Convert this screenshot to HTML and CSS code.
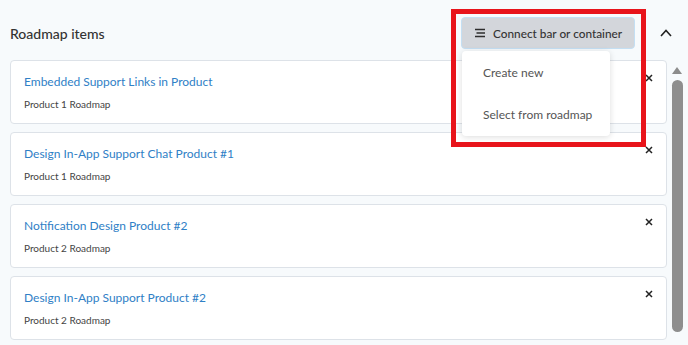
FILE: index.html
```html
<!DOCTYPE html>
<html lang="en">
<head>
    <meta charset="UTF-8">
    <meta name="viewport" content="width=device-width, initial-scale=1.0">
    <link rel="stylesheet" href="styles.css">
    <title>Roadmap items</title>
</head>
<body>
    <div class="panel">
        <div class="panel-head">
            <h2 class="panel-title">Roadmap items</h2>
            <div class="connect">
                <button class="connect-btn" type="button">
                    <svg width="12" height="10" viewBox="0 0 12 10">
                        <path d="M1 1.5h10M2.5 5h8.5M1 8.5h10" stroke="#2e2e2e" stroke-width="1.5" fill="none"/>
                    </svg>
                    Connect bar or container
                </button>
                <div class="menu">
                    <div class="menu-item">Create new</div>
                    <div class="menu-item">Select from roadmap</div>
                </div>
                <div class="highlight"></div>
            </div>
            <button class="collapse" type="button">
                <svg width="12" height="8" viewBox="0 0 12 8">
                    <path d="M1 7l5-5.5 5 5.5" stroke="#222" stroke-width="1.6" fill="none"/>
                </svg>
            </button>
        </div>

        <div class="panel-body">
            <ul class="items">
                <li class="item">
                    <a class="item-title" href="#">Embedded Support Links in Product</a>
                    <div class="item-sub">Product 1 Roadmap</div>
                    <button class="remove" type="button">
                        <svg width="8" height="8" viewBox="0 0 8 8"><path d="M1 1l6 6M7 1l-6 6" stroke="#222" stroke-width="1.5"/></svg>
                    </button>
                </li>
                <li class="item">
                    <a class="item-title" href="#">Design In-App Support Chat Product #1</a>
                    <div class="item-sub">Product 1 Roadmap</div>
                    <button class="remove" type="button">
                        <svg width="8" height="8" viewBox="0 0 8 8"><path d="M1 1l6 6M7 1l-6 6" stroke="#222" stroke-width="1.5"/></svg>
                    </button>
                </li>
                <li class="item">
                    <a class="item-title" href="#">Notification Design Product #2</a>
                    <div class="item-sub">Product 2 Roadmap</div>
                    <button class="remove" type="button">
                        <svg width="8" height="8" viewBox="0 0 8 8"><path d="M1 1l6 6M7 1l-6 6" stroke="#222" stroke-width="1.5"/></svg>
                    </button>
                </li>
                <li class="item">
                    <a class="item-title" href="#">Design In-App Support Product #2</a>
                    <div class="item-sub">Product 2 Roadmap</div>
                    <button class="remove" type="button">
                        <svg width="8" height="8" viewBox="0 0 8 8"><path d="M1 1l6 6M7 1l-6 6" stroke="#222" stroke-width="1.5"/></svg>
                    </button>
                </li>
            </ul>
            <div class="scrollbar">
                <span class="scroll-arrow"></span>
                <span class="scroll-thumb"></span>
            </div>
        </div>
    </div>
</body>
</html>
```

FILE: styles.css
```css
body {
    margin: 0;
    background: #f7fafc;
    font-family: "Lato", "Liberation Sans", sans-serif;
    color: #333;
}

.panel {
    width: 688px;
    height: 345px;
    overflow: hidden;
}

/* header row */
.panel-head {
    display: flex;
    align-items: center;
    height: 60px;
    padding: 6px 16px 0 10px;
    box-sizing: border-box;
    position: relative;
    z-index: 2;
}

.panel-title {
    margin: 0;
    font-size: 14px;
    font-weight: 500;
    color: #333;
    flex: 1;
}

.connect {
    position: relative;
}

.connect-btn {
    display: flex;
    align-items: center;
    gap: 7px;
    width: 174px;
    height: 32px;
    padding: 0 0 0 12px;
    background: #d3d6db;
    border: 1px solid #c4dff3;
    border-radius: 4px;
    font-family: inherit;
    font-size: 11.8px;
    font-weight: 500;
    color: #333;
    white-space: nowrap;
}

.menu {
    position: absolute;
    top: 34px;
    left: 1px;
    width: 148px;
    height: 85px;
    background: #fff;
    border-radius: 4px;
    box-shadow: 0 1px 6px rgba(0, 0, 0, 0.14);
}

.menu-item {
    padding: 0 21px;
    height: 44px;
    line-height: 44px;
    font-size: 12px;
    color: #555;
    white-space: nowrap;
}

.menu-item + .menu-item {
    height: 41px;
    line-height: 40px;
}

/* red annotation box */
.highlight {
    position: absolute;
    left: -10px;
    top: -8px;
    width: 185px;
    height: 128px;
    border: 5px solid #e8141b;
    pointer-events: none;
}

.collapse {
    margin-left: 25px;
    padding: 0;
    border: 0;
    background: none;
    display: flex;
}

/* list */
.panel-body {
    display: flex;
    gap: 4px;
    padding-left: 10px;
}

.items {
    list-style: none;
    margin: 0;
    padding: 0;
    width: 657px;
    display: flex;
    flex-direction: column;
    gap: 8px;
}

.item {
    position: relative;
    height: 64px;
    box-sizing: border-box;
    padding: 13px 13px 0;
    background: #fff;
    border: 1px solid #dde2e8;
    border-radius: 4px;
}

.item-title {
    display: block;
    font-size: 12px;
    line-height: 16px;
    color: #2f80c6;
    text-decoration: none;
}

.item-sub {
    margin-top: 6px;
    font-size: 10px;
    line-height: 16px;
    color: #444;
}

.remove {
    position: absolute;
    top: 13px;
    right: 13px;
    padding: 0;
    border: 0;
    background: none;
    display: flex;
}

.scrollbar {
    width: 12px;
    display: flex;
    flex-direction: column;
    align-items: center;
    padding-top: 7px;
}

.scroll-arrow {
    width: 0;
    height: 0;
    border-left: 5px solid transparent;
    border-right: 5px solid transparent;
    border-bottom: 7px solid #8c8c8c;
}

.scroll-thumb {
    margin-top: 6px;
    width: 11px;
    height: 252px;
    background: #8e8e8e;
    border-radius: 6px;
}
```
